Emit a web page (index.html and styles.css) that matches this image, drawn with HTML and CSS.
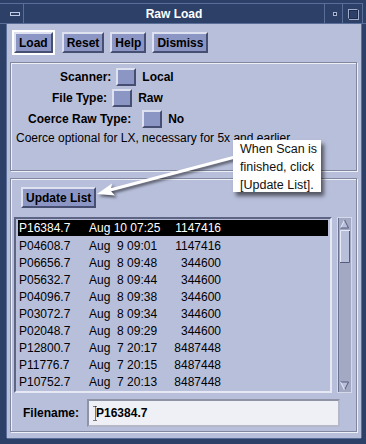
FILE: index.html
```html
<!DOCTYPE html>
<html>
	<head>
		<link rel="stylesheet" href="styles.css">
	</head>

	<body>
		<div class = "window">
			<div class = "titlebar">
				<div class = "tb-cell tb-menu"><span class = "menu-bar"></span></div>
				<div class = "tb-title">Raw Load</div>
				<div class = "tb-cell tb-min"><span class = "min-box"></span></div>
				<div class = "tb-cell tb-max"><span class = "max-box"></span></div>
				<div class = "tb-edge"></div>
			</div>

			<div class = "client">
				<div class = "actions">
					<span class = "default-ring"><button class = "btn">Load</button></span>
					<button class = "btn">Reset</button>
					<button class = "btn">Help</button>
					<button class = "btn">Dismiss</button>
				</div>

				<div class = "group options">
					<div class = "opt-row row-scanner">
						<span class = "opt-label">Scanner:</span>
						<span class = "toggle"></span>
						<span class = "opt-value">Local</span>
					</div>
					<div class = "opt-row row-type">
						<span class = "opt-label">File Type:</span>
						<span class = "toggle"></span>
						<span class = "opt-value">Raw</span>
					</div>
					<div class = "opt-row row-coerce">
						<span class = "opt-label">Coerce Raw Type:</span>
						<span class = "toggle"></span>
						<span class = "opt-value">No</span>
					</div>
					<p class = "note">Coerce optional for LX, necessary for 5x and earlier.</p>
				</div>

				<div class = "group files">
					<button class = "btn update-btn">Update List</button>

					<div class = "list-wrap">
						<div class = "listbox">
							<div class = "list-row selected"><span class = "c-name">P16384.7</span><span class = "c-date">Aug 10 07:25</span><span class = "c-size">1147416</span></div>
							<div class = "list-row"><span class = "c-name">P04608.7</span><span class = "c-date">Aug  9 09:01</span><span class = "c-size">1147416</span></div>
							<div class = "list-row"><span class = "c-name">P06656.7</span><span class = "c-date">Aug  8 09:48</span><span class = "c-size">344600</span></div>
							<div class = "list-row"><span class = "c-name">P05632.7</span><span class = "c-date">Aug  8 09:44</span><span class = "c-size">344600</span></div>
							<div class = "list-row"><span class = "c-name">P04096.7</span><span class = "c-date">Aug  8 09:38</span><span class = "c-size">344600</span></div>
							<div class = "list-row"><span class = "c-name">P03072.7</span><span class = "c-date">Aug  8 09:34</span><span class = "c-size">344600</span></div>
							<div class = "list-row"><span class = "c-name">P02048.7</span><span class = "c-date">Aug  8 09:29</span><span class = "c-size">344600</span></div>
							<div class = "list-row"><span class = "c-name">P12800.7</span><span class = "c-date">Aug  7 20:17</span><span class = "c-size">8487448</span></div>
							<div class = "list-row"><span class = "c-name">P11776.7</span><span class = "c-date">Aug  7 20:15</span><span class = "c-size">8487448</span></div>
							<div class = "list-row"><span class = "c-name">P10752.7</span><span class = "c-date">Aug  7 20:13</span><span class = "c-size">8487448</span></div>
						</div>

						<svg class = "scrollbar" width = "15" height = "176" viewBox = "0 0 15 176">
							<rect x = "0.5" y = "0.5" width = "14" height = "175" fill = "#a3a8c3" stroke = "#d6d9ea"/>
							<line x1 = "1.5" y1 = "1" x2 = "1.5" y2 = "175" stroke = "#6a7090"/>
							<polygon points = "3.5,11 7.5,3 11.5,11" fill = "#b8bfdb"/>
							<polyline points = "3.5,11 7.5,3" fill = "none" stroke = "#e8ebf6"/>
							<polyline points = "7.5,3 11.5,11 3.5,11" fill = "none" stroke = "#555c7c"/>
							<rect x = "3" y = "13" width = "10" height = "33" fill = "#b8bfdb"/>
							<polyline points = "3.5,46 3.5,13.5 13,13.5" fill = "none" stroke = "#e8ebf6"/>
							<polyline points = "12.5,14 12.5,45.5 3,45.5" fill = "none" stroke = "#555c7c"/>
							<polygon points = "3.5,165 11.5,165 7.5,173" fill = "#b8bfdb"/>
							<polyline points = "3.5,165 11.5,165 7.5,173" fill = "none" stroke = "#555c7c"/>
							<polyline points = "3.5,165 7.5,173" fill = "none" stroke = "#e8ebf6"/>
						</svg>
					</div>

					<div class = "filename-row">
						<span class = "fn-label">Filename:</span>
						<div class = "entry">
							<svg class = "caret" width = "5" height = "15" viewBox = "0 0 5 15">
								<path d = "M0.5 0.5h4M2.5 0.5v14M0.5 14.5h4" fill = "none" stroke = "#000" stroke-dasharray = "1 1"/>
							</svg>P16384.7
						</div>
					</div>
				</div>

				<svg class = "callout-arrow" width = "150" height = "50" viewBox = "0 0 150 50">
					<line x1 = "20" y1 = "40" x2 = "145" y2 = "7" stroke = "#fff" stroke-width = "3"/>
					<polygon points = "7,44 22,33.5 20.5,40.4 25,45.5" fill = "#fff"/>
				</svg>

				<div class = "callout">
					When Scan is<br>
					finished, click<br>
					[Update List].
				</div>
			</div>
		</div>
	</body>
</html>
```

FILE: styles.css
```css
body {
	margin: 0;
	font-family: "Liberation Sans", Arial, sans-serif;
	font-size: 12px;
	color: #000;
}

.window {
	position: relative;
	width: 366px;
	height: 444px;
	background: #2c4068;
	overflow: hidden;
}

/* title bar */

.titlebar {
	display: flex;
	height: 24px;
	box-sizing: border-box;
	padding-top: 3px;
	border-bottom: 1px solid #5a6e9a;
}

.tb-cell {
	display: flex;
	align-items: center;
	border-top: 1px solid #5a6e9a;
}

.tb-menu {
	width: 24px;
	box-sizing: border-box;
	padding-left: 10px;
	border-right: 1px solid #5a6e9a;
}

.menu-bar {
	width: 8px;
	height: 2px;
	border: 1px solid #c3cbe4;
	background: #2c4068;
}

.tb-title {
	flex: 1;
	display: flex;
	align-items: center;
	justify-content: center;
	color: #fff;
	font-weight: bold;
	font-size: 12px;
	border-top: 1px solid #5a6e9a;
}

.tb-min {
	width: 18px;
	box-sizing: border-box;
	border-left: 1px solid #5a6e9a;
	justify-content: center;
	padding-left: 2px;
}

.min-box {
	width: 2px;
	height: 2px;
	border: 1px solid #aab5d2;
	background: #1e2d4e;
}

.tb-max {
	width: 21px;
	box-sizing: border-box;
	border-left: 1px solid #5a6e9a;
	border-right: 1px solid #5a6e9a;
	justify-content: center;
}

.max-box {
	width: 8px;
	height: 8px;
	border: 1px solid #a0acca;
	border-right-color: #1e2d4e;
	border-bottom-color: #1e2d4e;
	box-shadow: 1px 1px 0 #a0acca, inset 1px 1px 0 #1e2d4e;
}

.tb-edge {
	width: 3px;
}

/* window body */

.client {
	position: relative;
	width: 354px;
	height: 414px;
	margin-left: 7px;
	background: #b8bfdb;
	box-shadow: -1px 0 0 #5a6e9a, 1px 0 0 #5a6e9a, 0 1px 0 #5a6e9a;
}

.actions {
	display: flex;
	align-items: center;
	gap: 6px;
	height: 25px;
	padding: 6px 0 0 5px;
}

.default-ring {
	display: flex;
	border: 2px solid #fff;
	margin-right: 1px;
}

.btn {
	height: 21px;
	padding: 0 3px;
	box-sizing: border-box;
	font-family: "Liberation Sans", Arial, sans-serif;
	font-size: 12px;
	font-weight: bold;
	color: #000;
	background: #8c96c4;
	border: 2px solid;
	border-color: #dde1f0 #464e72 #464e72 #dde1f0;
}

.group {
	margin: 7px 4px 0 3px;
	border: 1px solid #80879f;
	box-shadow: inset 1px 1px 0 #eef0f8, 1px 1px 0 #eef0f8;
	box-sizing: border-box;
}

/* options panel */

.options {
	height: 109px;
	padding-top: 5px;
}

.opt-row {
	display: flex;
	align-items: center;
	height: 18px;
	margin-bottom: 3px;
	font-weight: bold;
}

.row-scanner {
	padding-left: 49px;
}

.row-type {
	padding-left: 41px;
}

.row-coerce {
	padding-left: 17px;
}

.toggle {
	width: 20px;
	height: 18px;
	box-sizing: border-box;
	margin: 0 6px 0 5px;
	background: #8c96c4;
	border: 2px solid;
	border-color: #dde1f0 #464e72 #464e72 #dde1f0;
}

.row-coerce .toggle {
	margin-left: 11px;
}

.note {
	margin: 3px 0 0 5px;
	line-height: 14px;
}

/* file list panel */

.files {
	height: 254px;
	padding: 8px 4px 4px 3px;
}

.update-btn {
	margin-left: 7px;
}

.list-wrap {
	display: flex;
	gap: 5px;
	margin-top: 9px;
}

.listbox {
	width: 318px;
	height: 176px;
	box-sizing: border-box;
	padding: 1px 2px;
	border: 2px solid;
	border-color: #5d6484 #e6e9f4 #e6e9f4 #5d6484;
}

.list-row {
	display: flex;
	align-items: center;
	height: 17px;
	padding-left: 1px;
	white-space: pre;
}

.list-row.selected {
	background: #000;
	color: #fff;
	height: 16px;
	margin-bottom: 1px;
}

.c-name {
	width: 70px;
}

.c-date {
	width: 84px;
}

.c-size {
	width: 48px;
	text-align: right;
}

.filename-row {
	display: flex;
	align-items: center;
	margin-top: 6px;
	padding-left: 9px;
}

.fn-label {
	font-weight: bold;
	margin-right: 8px;
}

.entry {
	display: flex;
	align-items: center;
	width: 253px;
	height: 28px;
	box-sizing: border-box;
	padding-left: 4px;
	background: #eef0f6;
	border: 2px solid;
	border-color: #8e93a6 #b4b8c9 #b4b8c9 #8e93a6;
	font-weight: bold;
}

.caret {
	margin-right: -2px;
}

/* annotation */

.callout {
	position: absolute;
	left: 226px;
	top: 116px;
	width: 88px;
	height: 52px;
	box-sizing: border-box;
	padding-left: 7px;
	background: #fff;
	color: #111;
	font-size: 12.5px;
	line-height: 18px;
	box-shadow: 3px 4px 4px rgba(0, 0, 0, 0.55);
	z-index: 2;
}

.callout-arrow {
	position: absolute;
	left: 83px;
	top: 126px;
	overflow: visible;
	filter: drop-shadow(2px 2px 1.5px rgba(0, 0, 0, 0.6));
	z-index: 1;
}
```
